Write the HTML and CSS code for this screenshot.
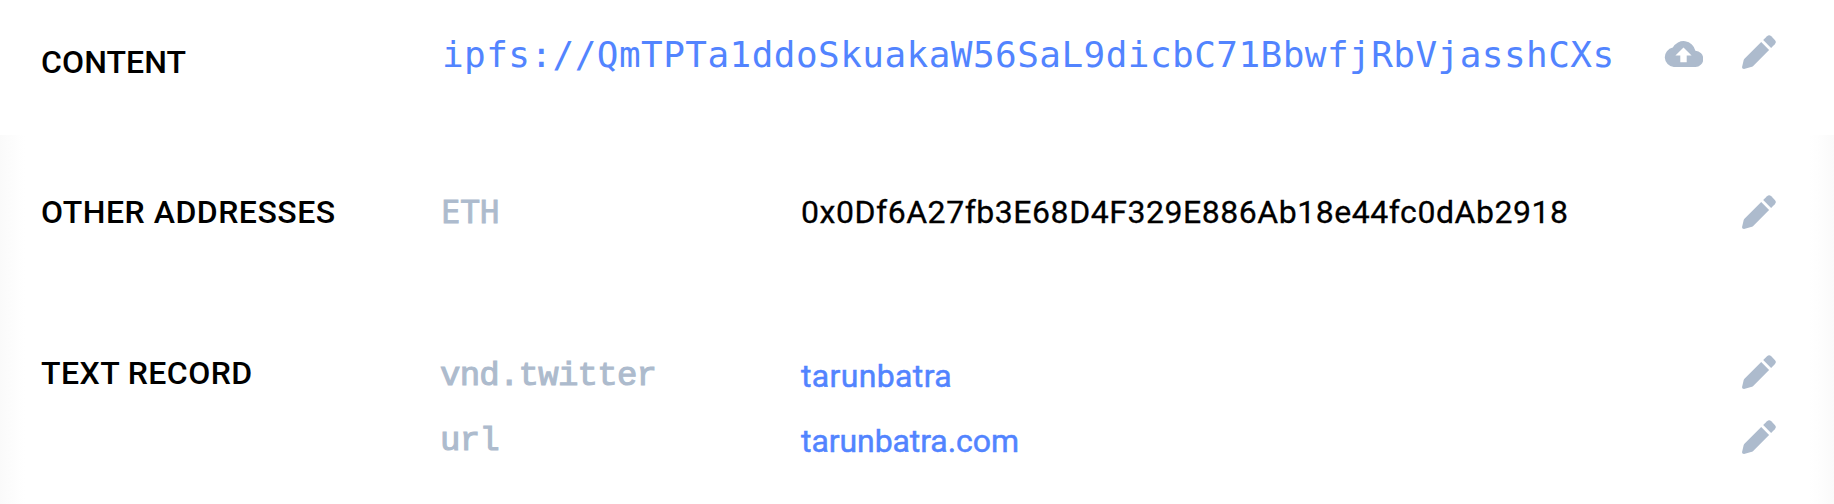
FILE: index.html
```html
<!DOCTYPE html>
<html lang="en">
<head>
<meta charset="utf-8">
<title>Records</title>
<link rel="stylesheet" href="styles.css">
</head>
<body>
<svg class="defs" aria-hidden="true">
  <symbol id="pencil" viewBox="0 0 34 34">
    <path d="M19.2 7.1 27.1 15 11.2 30.9Q10.3 31.7 9 32L2 34Q0 34 0 32.2L1.7 25Q2 24.2 2.7 23.5Z"/>
    <path d="M21.2 5.1 25 1.3Q27.1-.8 29.3 1.3L32.8 4.9Q34.9 7.1 32.8 9.3L29.1 13Z"/>
  </symbol>
  <symbol id="cloud" viewBox="0 0 39 26">
    <path fill-rule="evenodd" d="M31.4 9.8A12.1 12.1 0 0 0 8.8 6.6 9.8 9.8 0 0 0 9.8 26H31A8.1 8.1 0 0 0 31.4 9.8ZM22.7 14.6V21.2H16.3V14.6H11.4L19.5 6.6 27.6 14.6Z"/>
  </symbol>
</svg>
<main class="records">
  <section class="row row-content">
    <h2 class="label">CONTENT</h2>
    <a class="hash">ipfs://QmTPTa1ddoSkuakaW56SaL9dicbC71BbwfjRbVjasshCXs</a>
    <div class="actions">
      <svg class="cloud"><use href="#cloud"/></svg>
      <svg class="pencil"><use href="#pencil"/></svg>
    </div>
  </section>
  <div class="panel">
    <section class="row row-address">
      <h2 class="label label-addresses">OTHER ADDRESSES</h2>
      <span class="key">ETH</span>
      <span class="value address">0x0Df6A27fb3E68D4F329E886Ab18e44fc0dAb2918</span>
      <svg class="pencil"><use href="#pencil"/></svg>
    </section>
    <section class="row row-text">
      <h2 class="label label-text">TEXT RECORD</h2>
      <span class="key key-text">vnd.twitter</span>
      <a class="value link">tarunbatra</a>
      <svg class="pencil"><use href="#pencil"/></svg>
    </section>
    <section class="row row-text">
      <span></span>
      <span class="key key-text">url</span>
      <a class="value link link-url">tarunbatra.com</a>
      <svg class="pencil"><use href="#pencil"/></svg>
    </section>
  </div>
</main>
</body>
</html>
```
FILE: styles.css
```css
body {
  margin: 0;
  background: #fff;
  color: #000;
  font-family: Roboto, sans-serif;
}
.defs {
  display: block;
  width: 0;
  height: 0;
}
.records {
  height: 504px;
  overflow: hidden;
}
.row {
  display: grid;
  grid-template-columns: 401px 359px 1fr 34px;
  align-items: start;
  height: 65px;
  padding: 0 58px 0 41px;
  line-height: 40px;
  white-space: nowrap;
}
.row-content {
  grid-template-columns: 401px 1fr auto;
  height: 100px;
  padding-top: 35px;
}
.panel {
  box-sizing: border-box;
  height: 369px;
  padding-top: 60px;
  background:
    linear-gradient(to right, #fafafa, #fefefe 18px, #fff 25px) left / 50% 100% no-repeat,
    linear-gradient(to left, #fafafa, #fefefe 18px, #fff 25px) right / 50% 100% no-repeat;
}
.row-address {
  height: 160px;
}
.label {
  margin: 0;
  font-size: 32px;
  font-weight: 500;
}
.row-content .label {
  padding-top: 7px;
  letter-spacing: 0.1px;
}
.label-addresses {
  line-height: 34px;
  letter-spacing: 0.5px;
}
.label-text {
  line-height: 36px;
  letter-spacing: 0.45px;
}
.key {
  margin-left: -1px;
  color: #adbbcd;
  font: 32px/34px "DejaVu Sans Mono", monospace;
  letter-spacing: 0.2px;
  -webkit-text-stroke: 0.8px #adbbcd;
}
.key-text {
  margin-left: -2px;
  font: 34px/42px "Liberation Mono", monospace;
  letter-spacing: -0.75px;
  -webkit-text-stroke: 1.1px #adbbcd;
}
.value {
  font-size: 32px;
}
.address {
  line-height: 34px;
  letter-spacing: 0.54px;
  -webkit-text-stroke: 0.3px #000;
}
.hash {
  color: #5284ff;
  font: 36px/40px "DejaVu Sans Mono", monospace;
  letter-spacing: 0.45px;
}
.link {
  color: #5284ff;
  line-height: 42px;
  letter-spacing: 0.35px;
  -webkit-text-stroke: 0.5px #5284ff;
}
.link-url {
  letter-spacing: -0.08px;
}
.actions {
  display: flex;
  gap: 39px;
}
.cloud {
  width: 39px;
  height: 26px;
  margin-top: 6px;
  fill: #adbbcd;
}
.pencil {
  width: 34px;
  height: 34px;
  fill: #adbbcd;
}
```
